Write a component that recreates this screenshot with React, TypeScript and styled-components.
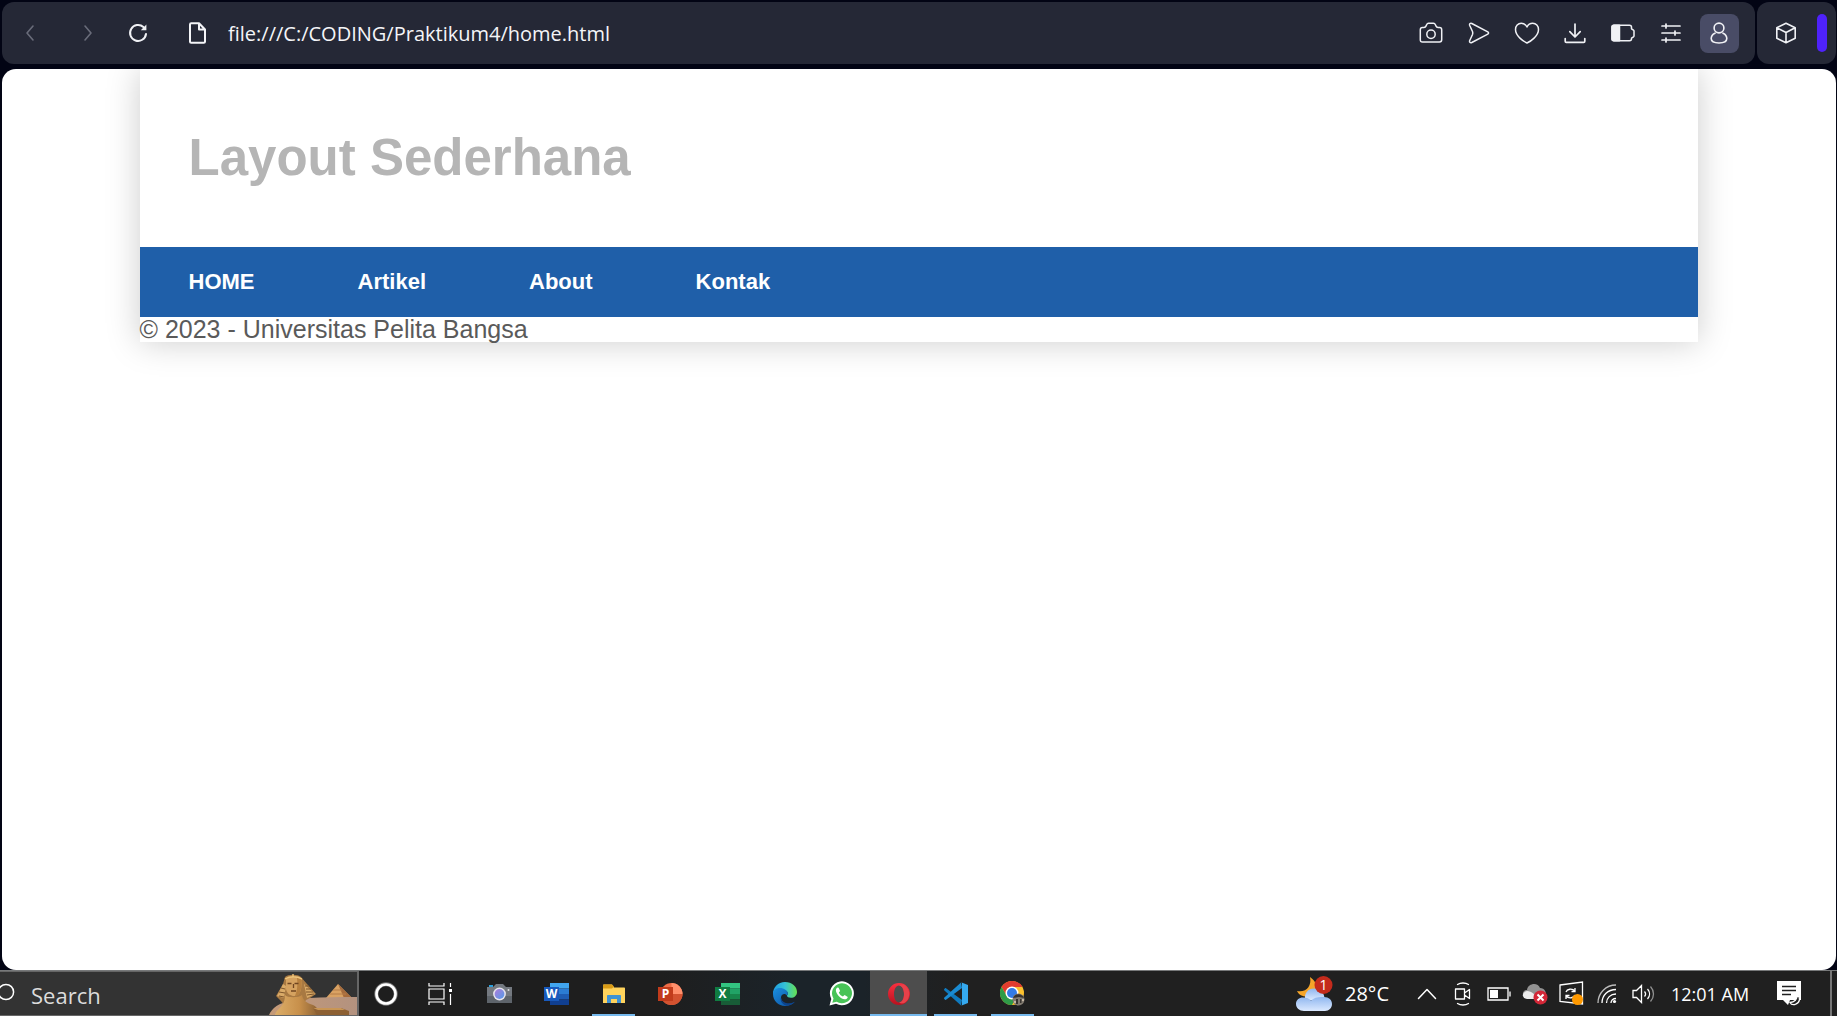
import React from "react";
import styled, { createGlobalStyle } from "styled-components";

const GlobalStyle = createGlobalStyle`
  *, *::before, *::after { box-sizing: border-box; }
  body { margin: 0; background: #020414; }
  button, input { font: inherit; color: inherit; background: none; border: 0; padding: 0; margin: 0; }
  svg { display: block; flex: none; }
`;

const uiFont = `"Open Sans", "Noto Sans", sans-serif`;

const Shell = styled.div`
  display: grid;
  grid-template-rows: auto 1fr auto;
  min-height: 100vh;
  font-family: ${uiFont};
`;

/* ---------- browser bar ---------- */

const BrowserBar = styled.header`
  display: flex;
  gap: 2px;
  padding: 2px 1px 5px 2px;
`;

const BarPanel = styled.div<{ $grow?: boolean }>`
  display: flex;
  align-items: center;
  flex: ${(p) => (p.$grow ? "1" : "none")};
  height: 62px;
  border-radius: 12px;
  background: #252836;
  padding-right: ${(p) => (p.$grow ? "12px" : "9px")};
  padding-left: ${(p) => (p.$grow ? "0" : "5px")};
`;

const ToolButton = styled.button<{ $width?: number; $dim?: boolean }>`
  display: flex;
  align-items: center;
  justify-content: center;
  width: ${(p) => p.$width ?? 48}px;
  height: 40px;
  color: ${(p) => (p.$dim ? "#696c7a" : "#f0f1f5")};
`;

const ProfileTile = styled.span`
  display: flex;
  align-items: center;
  justify-content: center;
  width: 39px;
  height: 39px;
  border-radius: 8px;
  background: #494c66;
`;

const AddressField = styled.label`
  display: flex;
  flex: 1;
  align-items: center;
  gap: 22px;
  padding-left: 30px;
  color: #f4f5f8;
`;

const AddressInput = styled.input`
  flex: 1;
  min-width: 0;
  height: 32px;
  font-size: 20px;
  outline: none;
`;

const AccentPill = styled.span`
  width: 10px;
  height: 38px;
  margin-left: 7px;
  border-radius: 5px;
  background: #4f22fb;
`;

/* ---------- web page ---------- */

const Viewport = styled.main`
  margin: 0 1px 0 2px;
  border-radius: 14px;
  background: #fff;
  overflow: hidden;
  font-family: "Liberation Sans", Arial, sans-serif;
`;

const Container = styled.div`
  width: 85%;
  margin: 0 auto;
  background: #fff;
  box-shadow: 0 0 32px #ccc;
`;

const PageHeader = styled.header`
  padding: 60px 49px;
`;

const Title = styled.h1`
  margin: 0;
  font-size: 51px;
  line-height: 58px;
  color: #b5b5b5;
`;

const PageNav = styled.nav`
  display: flex;
  gap: 103px;
  padding: 22px 49px;
  background: #1f5fa9;
`;

const NavLink = styled.a`
  font-size: 22px;
  line-height: 26px;
  font-weight: bold;
  color: #fff;
  text-decoration: none;
`;

const PageFooter = styled.footer`
  font-size: 25px;
  line-height: 25px;
  color: #5a5a5a;
`;

/* ---------- taskbar ---------- */

const Taskbar = styled.footer`
  display: flex;
  height: 46px;
  border-top: 1px solid #77797a;
  background: linear-gradient(90deg, #1e1e1e 36%, #1b2329 43%, #1b2329 47%, #202020 52%);
  color: #fff;
  overflow: hidden;
`;

const SearchBox = styled.label`
  display: flex;
  align-items: center;
  width: 359px;
  padding-top: 2px;
  border: solid #666;
  border-width: 1px 2px 1px 0;
  background: #333;
`;

const SearchInput = styled.input`
  flex: 1;
  min-width: 0;
  margin-left: 16px;
  font-size: 22px;
  line-height: 30px;
  outline: none;
  &::placeholder { color: #dcdcdc; opacity: 1; }
`;

const TaskButton = styled.button<{ $width?: number; $active?: boolean; $open?: boolean }>`
  display: flex;
  align-items: center;
  justify-content: center;
  position: relative;
  width: ${(p) => p.$width ?? 57}px;
  background: ${(p) => (p.$active ? "#4d4d4d" : "transparent")};
  &::after {
    content: "";
    display: ${(p) => (p.$open || p.$active ? "block" : "none")};
    position: absolute;
    bottom: 0;
    left: ${(p) => (p.$active ? 0 : 7)}px;
    right: ${(p) => (p.$active ? 0 : 7)}px;
    height: 2px;
    background: #76b9ed;
  }
`;

const AppList = styled.div`
  display: flex;
  margin-left: 4px;
`;

const Tray = styled.div`
  display: flex;
  align-items: center;
  margin-left: auto;
`;

const Weather = styled.button`
  display: flex;
  align-items: center;
  gap: 12px;
  margin-right: 20px;
  font-size: 20px;
  line-height: 28px;
`;

const TrayButton = styled.button<{ $width?: number }>`
  display: flex;
  align-items: center;
  justify-content: center;
  width: ${(p) => p.$width ?? 36}px;
  height: 44px;
`;

const Clock = styled.time`
  width: 92px;
  text-align: center;
  margin-left: 3px;
  font-size: 18px;
  line-height: 24px;
  white-space: nowrap;
`;

const NotificationButton = styled(TrayButton)`
  width: 66px;
  margin-right: 8px;
`;

const DesktopEdge = styled.button`
  align-self: stretch;
  width: 7px;
  border-left: 2px solid #777;
`;

/* ---------- icons ---------- */

type LineProps = { w: number; h: number; sw?: number; children: React.ReactNode };

const Line = ({ w, h, sw = 1.6, children }: LineProps) => (
  <svg width={w} height={h} viewBox={`0 0 ${w} ${h}`} fill="none" stroke="currentColor" strokeWidth={sw} strokeLinecap="round" strokeLinejoin="round" aria-hidden="true">
    {children}
  </svg>
);

const Back = () => <Line w={10} h={18}><path d="M8 2 2 9l6 7" /></Line>;
const Forward = () => <Line w={10} h={18}><path d="m2 2 6 7-6 7" /></Line>;
const Reload = () => (
  <Line w={20} h={20} sw={2}>
    <path d="M18 11a8 8 0 1 1-2.6-7" />
    <path d="M18.4 1.5v5.7h-5.6z" fill="currentColor" stroke="none" />
  </Line>
);
const FileIcon = () => (
  <Line w={18} h={22} sw={2}><path d="M2 2.5C2 1.7 2.4 1.2 3.2 1.2H11l6 6.3v12.2c0 .7-.5 1.1-1.2 1.1H3.2c-.8 0-1.2-.4-1.2-1.1zM11 1.5v6h5.7" /></Line>
);
const Camera = () => (
  <Line w={24} h={22} sw={1.5}>
    <path d="M3.5 5.5H5c1.1 0 1.7-.6 2.1-1.6l.5-1.2c.4-.9.9-1.4 1.9-1.4h5c1 0 1.5.5 1.9 1.4l.5 1.2c.4 1 1 1.6 2.1 1.6h1.5c1.4 0 2.2.8 2.2 2.2v10.1c0 1.4-.8 2.2-2.2 2.2h-17c-1.4 0-2.2-.8-2.2-2.2V7.7c0-1.4.8-2.2 2.2-2.2z" />
    <circle cx="12" cy="12.3" r="4.2" />
  </Line>
);
const Send = () => (
  <Line w={22} h={22} sw={1.5}><path d="M1.6 3.2C1.2 1.7 2.3.8 3.8 1.5l16 8.4c1 .6 1 1.7 0 2.2l-16 8.4c-1.5.7-2.6-.2-2.2-1.7L4.5 12.5c.3-.8.3-2.2 0-3z" /></Line>
);
const Heart = () => (
  <Line w={26} h={22} sw={1.5}><path d="M13 21C9.5 19.5 1.5 14 1.5 7.5 1.5 4 4 1.3 7.3 1.3c2.6 0 4.6 1.4 5.7 3.7 1.1-2.3 3.1-3.7 5.7-3.7 3.3 0 5.8 2.7 5.8 6.2C24.500 14 16.500 19.500 13 21z" /></Line>
);
const Download = () => (
  <Line w={22} h={22} sw={1.7}><path d="M11 2v12.500M5.800 9.700 11 15l5.200-5.300M1.200 16.500v2.700c0 .7.4 1.100 1.100 1.100h17.400c.7 0 1.100-.4 1.100-1.100v-2.700" /></Line>
);
const BatterySaver = () => (
  <Line w={24} h={18} sw={1.5}>
    <path d="M3 1.2h15.500c1.200 0 2 .8 2 2v1.600l2 1.400c.3.2.5.5.5.9v4.800c0 .4-.2.7-.5.9l-2 1.400v.6c0 1.200-.8 2-2 2H3c-1.200 0-2-.8-2-2V3.200c0-1.200.8-2 2-2z" />
    <path d="M3 1.2h5.500v15.600H3c-1.200 0-2-.8-2-2V3.200c0-1.200.8-2 2-2z" fill="currentColor" />
  </Line>
);
const Sliders = () => (
  <Line w={20} h={20} sw={1.7}><path d="M1 3h18M1 10h18M1 17h18M5 1v4M14 8v4M5 15v4" /></Line>
);
const Profile = () => (
  <Line w={18} h={22} sw={1.6}>
    <circle cx="9" cy="6" r="4.9" />
    <path d="M5 11.2c-2 .9-3.800 3-3.800 5.400C1.200 19.800 4.500 21 9 21s7.800-1.200 7.800-4.400c0-2.400-1.800-4.500-3.800-5.400" />
  </Line>
);
const Cube = () => (
  <Line w={22} h={22} sw={1.6}><path d="M11 1.2 20.200 5.800v10.400L11 20.800 1.800 16.200V5.800zM1.800 5.800 11 10.500l9.200-4.700M11 10.500v10.300" /></Line>
);

const SearchGlyph = () => (
  <svg width="15" height="24" viewBox="0 0 15 24" fill="none" stroke="#fff" strokeWidth="1.5" aria-hidden="true">
    <circle cx="6" cy="9" r="7.6" /><path d="M0 14.500-5 20" />
  </svg>
);

const Sphinx = () => (
  <svg width="88" height="41" viewBox="0 0 88 41" aria-hidden="true">
    <defs>
      <linearGradient id="stone" x1="0" x2="1"><stop offset="0" stopColor="#dcae69" /><stop offset=".55" stopColor="#c8904b" /><stop offset="1" stopColor="#8a6034" /></linearGradient>
      <linearGradient id="sand" x1="0" x2="1"><stop offset="0" stopColor="#c59a78" /><stop offset="1" stopColor="#b3927f" /></linearGradient>
    </defs>
    <path d="M57 24 69 10l14 14z" fill="#d9a263" /><path d="m69 10 6 14h8z" fill="#a66b3c" />
    <path d="m64 16 9 0M61 20h16" stroke="#b57c48" strokeWidth="1" />
    <path d="M0 41c3-7 9-12 24-15l16-2c14-1 30-1 48-1v18z" fill="url(#sand)" />
    <path d="M16 3C19 0 29 0 32 3l6 7 9 10-6 4-4 2-3 5H15l-3-4-5-5 7-12z" fill="#a87942" />
    <path d="M14 10 8 22l7 2 2-12zM35 10l3 14 8-4z" fill="#d9aa68" />
    <path d="m12 14 4 1m-6 3 6 1m-6 3 5 1M36 12l4 0M37 15l5 0M37 18l7 0M38 21l7-1" stroke="#7d552b" strokeWidth="1" />
    <path d="M17 5c4-3 12-3 16 0l-1 10c-1 5-4 7-7 7s-7-2-8-7z" fill="#d5a260" />
    <path d="M28 4c3 0 4 1 5 2l-1 9c-1 5-3 7-6 7 2-5 3-11 2-18z" fill="#b7803f" />
    <path d="M16 21c2 3 14 3 17 0 1 6 5 8 11 10 4 2 6 5 6 10H6c2-7 10-8 10-20z" fill="url(#stone)" />
    <path d="M18.500 9.500h4m3 0h4M22 17h5M24.500 10v4" stroke="#704621" strokeWidth="1.3" />
    <path d="M16 5c5-3 12-3 17 0M24 0v3" fill="none" stroke="#efc67c" strokeWidth="1.4" />
    <path d="M44 34h28l8 3v4H48z" fill="#8d6033" /><path d="M44 34h28l4 2H49z" fill="#c99655" />
  </svg>
);

const Cortana = () => (
  <svg width="24" height="24" aria-hidden="true"><circle cx="12" cy="12" r="9.700" fill="none" stroke="#777" strokeWidth="4" /><circle cx="12" cy="12" r="9.500" fill="none" stroke="#fff" strokeWidth="2.6" /></svg>
);
const TaskView = () => (
  <svg width="25" height="24" fill="none" stroke="#fff" strokeWidth="1.2" aria-hidden="true">
    <path d="M1 1v3h15V1M1 7h15v10H1zM1 23v-3h15v3M22.500 1v4M22.500 12v11" /><path d="M21 7h3v3h-3z" fill="#fff" stroke="none" />
  </svg>
);
const CameraApp = () => (
  <svg width="25" height="22" viewBox="0 0 25 22" aria-hidden="true">
    <defs><linearGradient id="lens" x1="0" x2="1" y2="1"><stop stopColor="#ae7cd9" /><stop offset="1" stopColor="#539bea" /></linearGradient></defs>
    <path d="M2 2h4v4H2z" fill="#2ca0dc" /><path d="M0 4h6l3-3h7l3 3h6v16H0z" fill="#747980" /><path d="M0 13h25v7H0z" fill="#5e646b" />
    <circle cx="12.5" cy="11" r="6.4" fill="#e7e5ed" /><circle cx="12.5" cy="11" r="4.9" fill="url(#lens)" /><circle cx="21.5" cy="7" r="1" fill="#ddd" />
  </svg>
);

type OfficeProps = { letter: string; tile: string; bands: [string, string, string, string] };
const Office = ({ letter, tile, bands }: OfficeProps) => (
  <svg width="25" height="24" viewBox="0 0 25 24" aria-hidden="true">
    {bands.map((c, i) => <path key={c} d={`M6 ${1 + i * 5.5}h19v5.5H6z`} fill={c} />)}
    <path d="M0 5h15v14H0z" fill={tile} />
    <text x="7.5" y="16" textAnchor="middle" fontSize="12" fontWeight="700" fill="#fff">{letter}</text>
  </svg>
);
const PowerPoint = () => (
  <svg width="25" height="24" viewBox="0 0 25 24" aria-hidden="true">
    <circle cx="13.5" cy="12" r="11" fill="#ed6c47" /><path d="M13.500 1a11 11 0 0 1 11 11h-11z" fill="#ff8f6b" /><path d="M24.500 12a11 11 0 0 1-22 0z" fill="#d35230" />
    <path d="M0 5h15v14H0z" fill="#c13b1b" />
    <text x="7.5" y="16" textAnchor="middle" fontSize="12" fontWeight="700" fill="#fff">P</text>
  </svg>
);
const Explorer = () => (
  <svg width="22" height="20" viewBox="0 0 22 20" aria-hidden="true">
    <path d="M0 1.500C0 1 .4.500 1 .500h8l2 3h10c.6 0 1 .4 1 1V19H0z" fill="#ffd35c" /><path d="M0 1.500C0 1 .4.500 1 .500h8l2 2-2 2H0z" fill="#d99b16" />
    <path d="M4 19v-7c0-.6.4-1 1-1h12c.6 0 1 .4 1 1v7h-4v-4H8v4z" fill="#3f92d4" />
  </svg>
);
const Edge = () => (
  <svg width="24" height="24" viewBox="0 0 24 24" aria-hidden="true">
    <defs>
      <linearGradient id="edgeTop" x1="0" x2="1"><stop stopColor="#1d9de2" /><stop offset=".5" stopColor="#35c1d6" /><stop offset="1" stopColor="#66e250" /></linearGradient>
      <linearGradient id="edgeLow" x1="0" x2="1" y2="1"><stop stopColor="#1a8fe0" /><stop offset="1" stopColor="#0c4fa0" /></linearGradient>
    </defs>
    <path d="M0 12C0 5 5 0 12 0s12 4.500 12 10c0 3.500-2.700 5.800-6 5.800-2.500 0-4-1-4-2 0-.7.800-1 .8-2.300 0-2-2-3.500-4.300-3.500C6 8 2 10 0 12z" fill="url(#edgeTop)" />
    <path d="M0 12c0-3.500 3-6 6.800-6 4.200 0 8 2.500 8 5.500 0 1.300-.8 1.600-.8 2.300-1.500-3-6-2-6 1.700 0 4 4 6.500 7.500 6.500 2.500 0 4.500-1 6.300-2.200C19.700 22.500 16 24 12 24 5.300 24 0 18.700 0 12z" fill="url(#edgeLow)" />
    <path d="M8 15.500C6.500 19 10 23 14 23.800c3.500-.3 6-1.800 7.800-4-6 3.300-13.500 1-13.800-4.300z" fill="#0d438c" />
  </svg>
);
const WhatsApp = () => (
  <svg width="25" height="25" viewBox="0 0 25 25" aria-hidden="true">
    <path d="M.5 24.500 2.300 18A12 12 0 1 1 7 22.800z" fill="#fff" /><path d="m3.300 21.700 1.200-4.200a10 10 0 1 1 3.200 3.200z" fill="#48c357" />
    <path d="M8.500 6.500c-1.500.8-2 2.600-1.300 4.500 1.300 3.700 4.700 6.700 8.300 7.300 1.500.2 3-.8 3.300-2.300l-3.200-1.900-1.700 1.500c-2-.8-3.300-2.200-4.100-4l1.300-1.500-1.500-3.400z" fill="#fff" />
  </svg>
);
const Opera = () => (
  <svg width="24" height="24" viewBox="0 0 24 24" aria-hidden="true">
    <defs><linearGradient id="opera" y2="1" x2="0"><stop stopColor="#fb3040" /><stop offset="1" stopColor="#b8111f" /></linearGradient></defs>
    <path d="M12 1a11 11 0 1 0 0 22 11 11 0 0 0 0-22zm0 2.500c3 0 5 3.700 5 8.500s-2 8.500-5 8.500S7 16.800 7 12s2-8.500 5-8.500z" fill="url(#opera)" fillRule="evenodd" />
    <path d="M12 3.500c2-1.500 4.500-1.300 6.500.2A11 11 0 0 1 18.500 20.300c-2 1.500-4.500 1.700-6.500.2 3 0 5-3.700 5-8.500s-2-8.500-5-8.500z" fill="#e8414a" />
  </svg>
);
const VSCode = () => (
  <svg width="24" height="24" viewBox="0 0 24 24" aria-hidden="true">
    <path d="M2 6.300c-.4-.3-.8-.3-1.200.1L.3 7c-.4.500-.4 1 .1 1.400L17 23.500l1-5.500z" fill="#0f79bd" />
    <path d="M2 17.700c-.4.300-.8.300-1.200-.1L.3 17c-.4-.5-.4-1 .1-1.400L17 .5l1 5.500z" fill="#1a8bd2" />
    <path d="M17 .3 24 3v18l-7 2.700c.6-.3 1-.7 1-1.200v-21c0-.500-.4-.900-1-1.200z" fill="#35a9ef" />
  </svg>
);
const Chrome = () => (
  <svg width="25" height="25" viewBox="0 0 25 25" aria-hidden="true">
    <circle cx="12" cy="12" r="12" fill="#fbc02d" /><path d="M1.600 6A12 12 0 0 1 22.400 6H12a6 6 0 0 0-5.200 9z" fill="#e23c2f" />
    <path d="M1.600 6A12 12 0 0 0 12 24l5.200-9A6 6 0 0 1 6.800 15z" fill="#2f9b48" />
    <circle cx="12" cy="12" r="6.5" fill="#fff" /><circle cx="12" cy="12" r="5" fill="#337be6" />
    <circle cx="18.5" cy="18.5" r="6" fill="#817a70" /><path d="M13 17c2-5 9-5 11 0l-5-1zM16 18h2v5h-2zM20 18h1.500v4H20z" fill="#37332f" /><path d="M14 20h2v2h-2zM22 18h2v2h-2z" fill="#c4b7a5" />
  </svg>
);

const WeatherIcon = () => (
  <svg width="37" height="36" viewBox="0 0 37 36" aria-hidden="true">
    <defs><linearGradient id="cloud" y2="1" x2="0"><stop stopColor="#8fb6ef" /><stop offset="1" stopColor="#dbe9ff" /></linearGradient></defs>
    <path d="M14 1c6 4 9 11 5 16-4 5-15 5-18-2 9 2 15-5 13-14z" fill="#f5a52a" />
    <path d="M9 24C8 17 12 12.500 18 12.500S29 17 28.500 24z" fill="url(#cloud)" />
    <path d="M8 35c-4.500 0-8-3-8-7s3-6.500 7-6.500c4 0 6 1 8 3 3-3 8-4 13-3.500 5 0 8 3 8 7s-3 7-7 7z" fill="url(#cloud)" />
    <circle cx="27.5" cy="9" r="9" fill="#c42b1c" />
    <text x="27.5" y="14" textAnchor="middle" fontSize="14" fill="#fff">1</text>
  </svg>
);
const Chevron = () => <Line w={20} h={12} sw={1.5}><path d="m1.500 10.500 8.500-9 8.500 9" /></Line>;
const MeetNow = () => (
  <Line w={18} h={24} sw={1.3}><path d="M3.500 2.500c3-2 8-2 11 0M3.500 21.500c3 2 8 2 11 0M1.500 7h9v10h-9zM10.500 11l5-3.500v9l-5-3.500" /></Line>
);
const Battery = () => (
  <svg width="24" height="14" fill="none" stroke="#fff" strokeWidth="1.3" aria-hidden="true"><path d="M1 1h20v12H1zM23 4.500v5" /><path d="M3 3h8v8H3z" fill="#fff" stroke="none" /></svg>
);
const Cloud = () => (
  <svg width="26" height="22" viewBox="0 0 26 22" aria-hidden="true">
    <path d="M5 15c-6-1-5-8 0-8 1-7 11-8 13-2 5 0 6 4 6 7v3z" fill="#929292" /><path d="M5 16c-6-1-5-7 0-8 5 0 8 4 11 8z" fill="#ececec" />
    <circle cx="18.5" cy="14.500" r="7" fill="#d32737" /><path d="m15.500 11.500 6 6m0-6-6 6" stroke="#fff" strokeWidth="2" />
  </svg>
);
const Sync = () => (
  <svg width="25" height="25" viewBox="0 0 25 25" fill="none" stroke="#fff" strokeWidth="1.3" aria-hidden="true">
    <path d="M1 4 23.500 1v22L1 20.500zM7 11c1-3 6-4 9-1m0-3v3.500h-3.500M16 14c-1 3-6 4-9 1m0 3v-3.500h3.500" /><circle cx="18.5" cy="18.5" r="5.500" fill="#ff9900" stroke="none" />
  </svg>
);
const Wifi = () => (
  <svg width="20" height="20" viewBox="0 0 20 20" fill="none" stroke="#fff" strokeWidth="1.3" aria-hidden="true">
    <path d="M1 19C1 9 9 1 19 1" opacity=".7" /><path d="M5 19C5 11 11 5.500 19 5.500M9.500 19c0-5 4-9 9.500-9M14 19c0-2.500 2-4.500 5-4.500" /><circle cx="17.5" cy="17.5" r="1.6" fill="#fff" stroke="none" />
  </svg>
);
const Sound = () => (
  <svg width="23" height="20" viewBox="0 0 23 20" fill="none" stroke="#fff" strokeWidth="1.3" aria-hidden="true">
    <path d="M1 6.500h3.500L9.500 1.500v17l-5-5H1zM12.500 7.500c1.300 1.500 1.300 3.500 0 5M15.500 5c2.700 3 2.700 7 0 10" /><path d="M18.500 2.500c4 4.500 4 10.500 0 15" opacity=".5" />
  </svg>
);
const Notifications = () => (
  <svg width="25" height="25" viewBox="0 0 25 25" aria-hidden="true">
    <path d="M0 0h24v19H13l-2 5-5-5H0z" fill="#fff" /><path d="M5 5.500h14M5 9.500h14M5 13.500h9" stroke="#202020" strokeWidth="1.4" />
    <path d="M20 13c4 4 3 9-2 10.500-2 .5-4 0-5-2 4 0 8-3 7-8.500z" fill="#202020" stroke="#fff" strokeWidth="1.3" />
  </svg>
);

/* ---------- data ---------- */

const tools = [
  { name: "Snapshot", icon: <Camera /> },
  { name: "Send", icon: <Send /> },
  { name: "Favourite", icon: <Heart /> },
  { name: "Downloads", icon: <Download /> },
  { name: "Battery saver", icon: <BatterySaver /> },
  { name: "Easy setup", icon: <Sliders /> },
  { name: "Profile", icon: <ProfileTile><Profile /></ProfileTile> },
];

const links = ["HOME", "Artikel", "About", "Kontak"];

const apps = [
  { name: "Camera", icon: <CameraApp /> },
  { name: "Word", icon: <Office letter="W" tile="#185abd" bands={["#41a5ee", "#2b7cd3", "#1e5cb3", "#103f91"]} /> },
  { name: "File Explorer", icon: <Explorer />, open: true },
  { name: "PowerPoint", icon: <PowerPoint /> },
  { name: "Excel", icon: <Office letter="X" tile="#107c41" bands={["#33c481", "#21a366", "#17854b", "#185c37"]} /> },
  { name: "Edge", icon: <Edge /> },
  { name: "WhatsApp", icon: <WhatsApp /> },
  { name: "Opera", icon: <Opera />, active: true },
  { name: "Visual Studio Code", icon: <VSCode />, open: true },
  { name: "Chrome", icon: <Chrome />, open: true },
];

const trayItems = [
  { name: "Show hidden icons", icon: <Chevron /> },
  { name: "Meet now", icon: <MeetNow /> },
  { name: "Battery", icon: <Battery /> },
  { name: "OneDrive", icon: <Cloud /> },
  { name: "Updates", icon: <Sync /> },
  { name: "Network", icon: <Wifi /> },
  { name: "Volume", icon: <Sound /> },
];

export default function App() {
  return (
    <Shell>
      <GlobalStyle />
      <BrowserBar>
        <BarPanel $grow>
          <ToolButton $width={56} $dim aria-label="Back"><Back /></ToolButton>
          <ToolButton $width={60} $dim aria-label="Forward"><Forward /></ToolButton>
          <ToolButton $width={40} aria-label="Reload"><Reload /></ToolButton>
          <AddressField>
            <FileIcon />
            <AddressInput aria-label="Address" defaultValue="file:///C:/CODING/Praktikum4/home.html" spellCheck={false} />
          </AddressField>
          {tools.map((t) => <ToolButton key={t.name} aria-label={t.name}>{t.icon}</ToolButton>)}
        </BarPanel>
        <BarPanel>
          <ToolButton aria-label="Extensions"><Cube /></ToolButton>
          <AccentPill />
        </BarPanel>
      </BrowserBar>

      <Viewport>
        <Container>
          <PageHeader><Title>Layout Sederhana</Title></PageHeader>
          <PageNav>
            {links.map((l) => <NavLink key={l} href={`#${l.toLowerCase()}`}>{l}</NavLink>)}
          </PageNav>
          <PageFooter>© 2023 - Universitas Pelita Bangsa</PageFooter>
        </Container>
      </Viewport>

      <Taskbar>
        <SearchBox>
          <SearchGlyph />
          <SearchInput aria-label="Search" placeholder="Search" />
          <Sphinx />
        </SearchBox>
        <TaskButton $width={54} aria-label="Cortana"><Cortana /></TaskButton>
        <TaskButton $width={54} aria-label="Task view"><TaskView /></TaskButton>
        <AppList>
          {apps.map((a) => (
            <TaskButton key={a.name} aria-label={a.name} $open={a.open} $active={a.active}>{a.icon}</TaskButton>
          ))}
        </AppList>
        <Tray>
          <Weather><WeatherIcon />28°C</Weather>
          {trayItems.map((t) => <TrayButton key={t.name} aria-label={t.name}>{t.icon}</TrayButton>)}
          <Clock>12:01 AM</Clock>
          <NotificationButton aria-label="Notifications"><Notifications /></NotificationButton>
          <DesktopEdge aria-label="Show desktop" />
        </Tray>
      </Taskbar>
    </Shell>
  );
}
